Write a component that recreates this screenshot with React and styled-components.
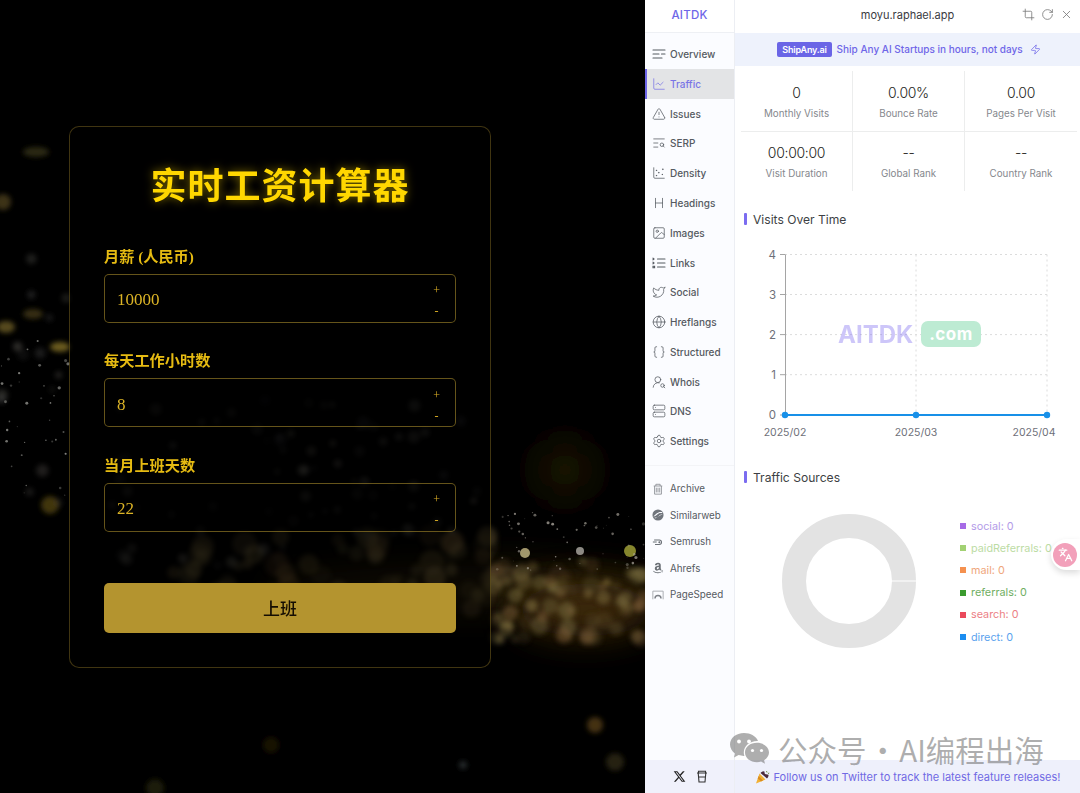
import React from "react";
import styled, { createGlobalStyle } from "styled-components";
import {
  ChartLine, TriangleAlert, TextSearch, ChartScatter, Heading, Image, Twitter, Globe, Braces,
  UserRoundSearch, Server, Settings, Crop, RotateCw, X, Zap, Languages
} from "lucide-react";
import { FaXTwitter, FaAmazon } from "react-icons/fa6";

const GlobalStyle = createGlobalStyle`
  html, body { margin: 0; padding: 0; height: 100%; background: #000; overflow: hidden; }
  * { box-sizing: border-box; }
`;

const Page = styled.div`
  position: relative;
  display: flex;
  width: 1080px;
  height: 793px;
  overflow: hidden;
  font-family: Inter, "Noto Sans CJK SC", sans-serif;
`;

/* left side: the calculator */
const Stage = styled.div`
  position: relative;
  flex: 0 0 645px;
  display: flex;
  align-items: center;
  padding-left: 69px;
  background: #000;
`;

const Bokeh = styled.svg`
  position: absolute;
  inset: 0;
`;

const Card = styled.form`
  position: relative;
  width: 422px;
  height: 542px;
  padding: 35px 34px;
  border: 1px solid rgba(212, 175, 55, 0.3);
  border-radius: 10px;
  background: rgba(0, 0, 0, 0.55);
  font-family: "Liberation Serif", "Noto Sans CJK SC", serif;
`;

const Title = styled.h1`
  margin: 0 0 33px;
  height: 50px;
  line-height: 50px;
  text-align: center;
  font-size: 36px;
  font-weight: 700;
  letter-spacing: 1px;
  color: #ffd700;
  text-shadow: 0 0 10px rgba(255, 215, 0, 0.5);
`;

const Field = styled.div`
  margin-bottom: 26.7px;
`;

const FieldLabel = styled.label`
  display: block;
  height: 24px;
  margin-bottom: 5px;
  line-height: 24px;
  font-size: 15.2px;
  font-weight: 700;
  color: #e6bb12;
`;

const InputBox = styled.div`
  display: flex;
  align-items: center;
  height: 49px;
  padding: 0 15px 0 12px;
  border: 1px solid rgba(212, 175, 55, 0.48);
  border-radius: 5px;
  background: rgba(0, 0, 0, 0.4);
`;

const NumberInput = styled.input`
  flex: 1;
  min-width: 0;
  border: 0;
  outline: 0;
  padding: 4px 0 0;
  background: transparent;
  font: 17px "Liberation Serif", serif;
  color: #dcb426;
`;

const Stepper = styled.div`
  display: flex;
  flex-direction: column;
  justify-content: space-between;
  height: 33px;
  margin-top: 5px;
  text-align: center;
  font: 12px/12px "Liberation Serif", serif;
  color: #d9ad25;
`;

const Submit = styled.button`
  display: block;
  width: 352px;
  height: 50px;
  margin-top: 51px;
  border: 0;
  border-radius: 5px;
  background: #b4942f;
  font-family: "Liberation Serif", "Noto Sans CJK SC", serif;
  font-size: 17px;
  font-weight: 500;
  color: #140d02;
`;

/* right side: the extension panel */
const Panel = styled.div`
  flex: 1;
  display: flex;
  background: #fff;
`;

const Sidebar = styled.aside`
  flex: 0 0 90px;
  display: flex;
  flex-direction: column;
  border-right: 1px solid #eceef3;
  background: #fbfcff;
`;

const Logo = styled.div`
  height: 33px;
  line-height: 30px;
  border-bottom: 1px solid #eef0f4;
  background: #fff;
  text-align: center;
  font-size: 11.5px;
  font-weight: 500;
  letter-spacing: 0.2px;
  color: #6e66e8;
`;

const NavGroup = styled.nav`
  padding-top: ${p => p.$top}px;
  margin-top: ${p => p.$gap}px;
  border-top: ${p => (p.$gap ? "1px solid #f3f4f7" : "0")};
`;

const NavItem = styled.a`
  display: flex;
  align-items: center;
  gap: ${p => (p.$small ? 6 : 4)}px;
  height: ${p => (p.$small ? 26.5 : 29.77)}px;
  padding-left: 5px;
  border-left: 2px solid ${p => (p.$active ? "#6e66e8" : "transparent")};
  background: ${p => (p.$active ? "#e3e4e6" : "transparent")};
  font-size: ${p => (p.$small ? 9.8 : 10)}px;
  font-weight: ${p => (p.$small ? 400 : 500)};
  color: ${p => (p.$active ? "#7a74e6" : "#555a61")};
  white-space: nowrap;

  svg {
    flex: 0 0 ${p => (p.$small ? 12 : 14)}px;
    width: ${p => (p.$small ? 12 : 14)}px;
    height: ${p => (p.$small ? 12 : 14)}px;
  }
`;

const SideFooter = styled.div`
  display: flex;
  align-items: center;
  justify-content: center;
  gap: 10px;
  height: 33px;
  margin-top: auto;
  padding-left: 1px;
  background: #f0f1fb;
  color: #222;
`;

const Main = styled.main`
  flex: 1;
  min-width: 0;
  display: flex;
  flex-direction: column;
`;

const Header = styled.header`
  position: relative;
  height: 33px;
  line-height: 30px;
  text-align: center;
  font-size: 11px;
  color: #3a3a3f;
  background: #fff;
`;

const HeaderTools = styled.div`
  position: absolute;
  top: 8px;
  right: 7px;
  display: flex;
  gap: 6px;
  color: #777;

  svg {
    width: 13px;
    height: 13px;
  }
`;

const Banner = styled.div`
  display: flex;
  align-items: center;
  justify-content: center;
  gap: 5px;
  height: 33px;
  padding: 0 0 1px 3px;
  background: #eef2fc;
  font-size: 10px;
  font-weight: 500;
  color: #6e66e8;
`;

const BannerTag = styled.span`
  padding: 2px 5px;
  border-radius: 2px;
  background: #6a65e6;
  font-size: 9px;
  font-weight: 600;
  letter-spacing: -0.2px;
  color: #fff;
`;

const StatsGrid = styled.div`
  display: grid;
  grid-template-columns: repeat(3, 112px);
  margin: 5px 3px 0 6px;
`;

const Stat = styled.div`
  height: 60px;
  padding-top: ${p => (p.$lower ? 11 : 12)}px;
  text-align: center;
  border-right: ${p => (p.$last ? "0" : "1px solid #eceded")};
  border-top: ${p => (p.$lower ? "1px solid #eceded" : "0")};
`;

const StatValue = styled.div`
  height: 20px;
  line-height: 20px;
  font-size: 14px;
  font-weight: 300;
  letter-spacing: -0.3px;
  color: #1f1f22;
`;

const StatLabel = styled.div`
  margin-top: 2px;
  line-height: 18px;
  font-size: 9.8px;
  color: #85878d;
`;

const SectionTitle = styled.h2`
  display: flex;
  align-items: center;
  gap: 6px;
  height: 20px;
  margin: ${p => p.$top}px 0 0 9px;
  font-size: 12.1px;
  font-weight: 400;
  color: #3d3f44;

  &::before {
    content: "";
    width: 3px;
    height: 12px;
    border-radius: 1px;
    background: #7b6cf0;
  }
`;

const Chart = styled.svg`
  display: block;
  flex: 0 0 auto;
  margin-left: ${p => p.$left || 0}px;
`;

const SourcesRow = styled.div`
  display: flex;
  align-items: flex-start;
  margin-top: 14px;
`;

const Legend = styled.ul`
  margin: 14px 0 0 31px;
  padding: 0;
  list-style: none;
  white-space: nowrap;
`;

const LegendItem = styled.li`
  display: flex;
  align-items: center;
  gap: 5px;
  height: 22.2px;
  font-size: 10.8px;
  color: ${p => p.$text};

  &::before {
    content: "";
    width: 6px;
    height: 6px;
    background: ${p => p.$dot};
  }
`;

const Footer = styled.footer`
  display: flex;
  align-items: center;
  justify-content: center;
  gap: 4px;
  height: 33px;
  margin-top: auto;
  background: #eef0fb;
  font-size: 11px;
  color: #7069e4;
  white-space: nowrap;
`;

const FloatPill = styled.div`
  position: absolute;
  top: 539px;
  right: 0;
  display: flex;
  align-items: center;
  width: 29px;
  height: 31px;
  padding-left: 2px;
  border-radius: 16px 0 0 16px;
  background: #fff;
  box-shadow: 0 3px 6px rgba(0, 0, 0, 0.14);
`;

const FloatIcon = styled.div`
  display: flex;
  align-items: center;
  justify-content: center;
  width: 24px;
  height: 24px;
  border-radius: 50%;
  background: #f2a0ba;
  color: #fff;
`;

const Watermark = styled.div`
  position: absolute;
  left: 729px;
  top: 729px;
  display: flex;
  align-items: center;
  gap: 8px;
  height: 40px;
  font-family: "Noto Sans CJK SC", sans-serif;
  font-size: 29.5px;
  word-spacing: -5px;
  color: rgba(120, 120, 120, 0.6);
  white-space: nowrap;
`;

/* small seeded generator so the dust is the same on each load */
const seeded = seed => () => {
  seed = (seed * 16807) % 2147483647;
  return (seed - 1) / 2147483646;
};

const makeDust = () => {
  const r = seeded(4242);
  const gold = ["#8f7f48", "#7f7444", "#97834a", "#705f38", "#80603a"];
  const grey = ["#8d8a80", "#6f6c66", "#a09c8c", "#5c5c60"];
  const pick = list => list[Math.floor(r() * list.length)];
  const spots = [];
  // gold band under the card
  for (let i = 0; i < 70; i++) {
    const x = 170 + r() * 321;
    spots.push({ x, y: 535 + r() * 75, s: 5 + r() * 8, c: pick(gold), o: 0.12 + r() * 0.28, f: "m" });
  }
  // gold band right of the card
  for (let i = 0; i < 70; i++) {
    spots.push({ x: 491 + r() * 154, y: 560 + r() * 80, s: 3.5 + r() * 6, c: pick(gold), o: 0.15 + r() * 0.35, f: "m" });
  }
  // grey soft bokeh inside the lower card
  for (let i = 0; i < 80; i++) {
    const x = 100 + r() * 390;
    const y = 400 + r() * 170;
    spots.push({ x, y, s: 2.5 + r() * 4, c: pick(grey), o: 0.08 + r() * 0.22, f: "m" });
  }
  // left edge, soft blobs
  for (let i = 0; i < 14; i++) {
    spots.push({ x: r() * 68, y: 230 + r() * 280, s: 3 + r() * 4, c: pick(grey), o: 0.12 + r() * 0.2, f: "m" });
  }
  // left edge, small specks
  for (let i = 0; i < 36; i++) {
    spots.push({ x: r() * 68, y: 340 + r() * 160, s: 0.5 + r() * 1.2, c: "#b0b0aa", o: 0.25 + r() * 0.45, f: "s" });
  }
  // sharp specks at the right
  for (let i = 0; i < 60; i++) {
    spots.push({ x: 492 + r() * 153, y: 512 + r() * 60, s: 0.4 + r() * 1.2, c: "#b8b2a8", o: 0.25 + r() * 0.5, f: "s" });
  }
  return spots;
};

const dust = makeDust();

const DustLayer = () => (
  <Bokeh width="645" height="793" viewBox="0 0 645 793">
    <defs>
      <filter id="soft" x="-50%" y="-50%" width="200%" height="200%"><feGaussianBlur stdDeviation="2.8" /></filter>
      <filter id="crisp" x="-50%" y="-50%" width="200%" height="200%"><feGaussianBlur stdDeviation="0.5" /></filter>
      <filter id="wide" x="-150%" y="-250%" width="400%" height="600%"><feGaussianBlur stdDeviation="18" /></filter>
    </defs>
    <ellipse cx="470" cy="590" rx="210" ry="24" fill="#3c2e10" opacity="0.55" filter="url(#wide)" />
    <ellipse cx="585" cy="610" rx="70" ry="26" fill="#50340e" opacity="0.75" filter="url(#wide)" />
    <ellipse cx="565" cy="470" rx="30" ry="32" fill="#1c1204" opacity="0.9" filter="url(#wide)" />
    <g filter="url(#soft)">
      {dust.filter(d => d.f === "m").map((d, i) => (
        <circle key={i} cx={d.x} cy={d.y} r={d.s} fill={d.c} opacity={d.o} />
      ))}
      <circle cx="3" cy="202" r="8" fill="#6d5b28" opacity="0.55" />
      <ellipse cx="36" cy="152" rx="13" ry="5" fill="#4a4220" opacity="0.6" />
      <ellipse cx="6" cy="327" rx="9" ry="6" fill="#7a6a28" opacity="0.7" />
      <ellipse cx="60" cy="347" rx="10" ry="5" fill="#8f7a28" opacity="0.75" />
      <ellipse cx="33" cy="314" rx="10" ry="5" fill="#5a4c1e" opacity="0.6" />
      <circle cx="50" cy="505" r="9" fill="#5d4c16" opacity="0.7" />
      <circle cx="155" cy="788" r="9" fill="#3a3510" opacity="0.5" />
      <circle cx="271" cy="745" r="8" fill="#2a1a08" opacity="0.6" />
      <circle cx="595" cy="725" r="8" fill="#7c5a1e" opacity="0.55" />
      <circle cx="463" cy="765" r="4" fill="#3d4348" opacity="0.6" />
      <circle cx="615" cy="762" r="9" fill="#4c4220" opacity="0.5" />
    </g>
    <g filter="url(#crisp)">
      <circle cx="630" cy="551" r="6" fill="#a8a83a" opacity="0.8" />
      <circle cx="525" cy="553" r="5" fill="#c8bc86" opacity="0.8" />
      <circle cx="580" cy="551" r="4" fill="#bcb8b0" opacity="0.75" />
      {dust.filter(d => d.f === "s").map((d, i) => (
        <circle key={i} cx={d.x} cy={d.y} r={d.s} fill={d.c} opacity={d.o} />
      ))}
    </g>
  </Bokeh>
);

const OverviewIcon = () => (
  <svg viewBox="0 0 14 14" fill="none" stroke="currentColor" strokeWidth="1.1" strokeLinecap="round">
    <path d="M1 3h12M1 7h6M9.500 7H13M1 11h9" />
  </svg>
);

const LinksIcon = () => (
  <svg viewBox="0 0 14 14" fill="none" stroke="currentColor" strokeWidth="1.1" strokeLinecap="round">
    <path d="M5.500 3H13M5.500 7H13M5.500 11H13M1 2.200l1 .8-1 .8M1 6.200l1 .8-1 .8M1 10.200h1.600v1.600H1z" />
  </svg>
);

const ArchiveIcon = () => (
  <svg viewBox="0 0 14 14" fill="none" stroke="#8b8f94" strokeWidth="1">
    <path d="M2 3.500h10M3 3.500V13h8V3.500M5 5.500V11M7 5.500V11M9 5.500V11M4.500 3.500V1.500h5v2" />
  </svg>
);

const SimilarwebIcon = () => (
  <svg viewBox="0 0 14 14">
    <circle cx="7" cy="7" r="6.500" fill="#70757c" />
    <path d="M1.500 8.800c2.200-.2 3.600-1.500 5-2.800 1.500-1.300 3.200-1.800 5.800-1.200-.2-.5-.5-1-.8-1.200-2-.5-4.600.2-6.200 1.600M12.500 5.900c-2 .2-3.400 1.100-4.600 2.300-1.400 1.300-3.200 2.200-5 2l.6 1" fill="#fbfcff" />
  </svg>
);

const SemrushIcon = () => (
  <svg viewBox="0 0 14 14" fill="none" stroke="#6b7076" strokeWidth="1.2">
    <path d="M1 7h4.500M2.500 4.600h6a2.600 2.600 0 0 1 0 5.200h-5" />
    <circle cx="8.600" cy="7.200" r="1.200" fill="#6b7076" stroke="none" />
  </svg>
);

const SpeedIcon = () => (
  <svg viewBox="0 0 14 14" fill="none" stroke="#7d8187" strokeWidth="1.1">
    <path d="M1 2.500h12M1 2.500V12M13 2.500V12" stroke="#a8abb0" />
    <path d="M3.500 11a3.500 3.500 0 0 1 7 0" strokeWidth="1.700" />
  </svg>
);

const CupIcon = () => (
  <svg width="12" height="13" viewBox="0 0 12 13" fill="none" stroke="#333" strokeWidth="1.1">
    <path d="M1 3h10M2.500 3V1.300h7V3M2.200 3l.8 9h6l.8-9M2.600 7h6.800" />
  </svg>
);

const PopperIcon = () => (
  <svg width="15" height="14" viewBox="0 0 15 14">
    <path d="M1 13.500 4.500 3.500l6 6z" fill="#f2b134" />
    <path d="M3.600 6 8 10.500l-2 1L2.700 8.500z" fill="#d98c1f" />
    <path d="M5.500 3c1-1.200 2.800-1.800 3.800-1.600l.6 2.600 3.600.8c.2 1.200-.4 2.600-1.500 3.600z" fill="#4b2a3c" />
    <path d="M11 1.500l1.400.6M13 3.500l1.200-.4" stroke="#6a8f3a" strokeWidth="1" />
  </svg>
);

const WeChatIcon = () => (
  <svg width="41" height="34" viewBox="0 0 41 34" fill="rgba(120,120,120,0.6)">
    <path d="M15 1C7 1 1 6 1 12.500c0 3.600 2 6.800 5 9l-1 4 4.600-2.400c1.700.5 3.400.8 5.200.8h.6c-.4-1.200-.6-2.300-.6-3.500 0-6.400 6-11.400 13.400-11.400h.8C27.300 4.400 21.600 1 15 1z" />
    <path d="M40 20.500C40 15 34.700 10.800 28 10.800S16 15 16 20.500 21.300 30.200 28 30.200c1.400 0 2.800-.2 4.100-.6l3.900 2.100-.9-3.400c2.900-1.900 4.900-4.800 4.900-7.800z" />
    <circle cx="10" cy="9.500" r="1.900" fill="#fff" />
    <circle cx="20" cy="9.500" r="1.900" fill="#fff" />
    <circle cx="23.500" cy="18.500" r="1.600" fill="#fff" />
    <circle cx="32.500" cy="18.500" r="1.600" fill="#fff" />
  </svg>
);

const navItems = [
  ["Overview", <OverviewIcon />],
  ["Traffic", <ChartLine strokeWidth={1.3} />, true],
  ["Issues", <TriangleAlert strokeWidth={1.3} />],
  ["SERP", <TextSearch strokeWidth={1.3} />],
  ["Density", <ChartScatter strokeWidth={1.3} />],
  ["Headings", <Heading strokeWidth={1.3} />],
  ["Images", <Image strokeWidth={1.3} />],
  ["Links", <LinksIcon />],
  ["Social", <Twitter strokeWidth={1.3} />],
  ["Hreflangs", <Globe strokeWidth={1.3} />],
  ["Structured", <Braces strokeWidth={1.3} />],
  ["Whois", <UserRoundSearch strokeWidth={1.3} />],
  ["DNS", <Server strokeWidth={1.3} />],
  ["Settings", <Settings strokeWidth={1.3} />],
];

const toolItems = [
  ["Archive", <ArchiveIcon />],
  ["Similarweb", <SimilarwebIcon />],
  ["Semrush", <SemrushIcon />],
  ["Ahrefs", <FaAmazon color="#6b7076" />],
  ["PageSpeed", <SpeedIcon />],
];

const stats = [
  ["0", "Monthly Visits"],
  ["0.00%", "Bounce Rate"],
  ["0.00", "Pages Per Visit"],
  ["00:00:00", "Visit Duration"],
  ["--", "Global Rank"],
  ["--", "Country Rank"],
];

const sources = [
  ["social: 0", "#a66be6", "#b39be8"],
  ["paidReferrals: 0", "#a2d173", "#bcdca4"],
  ["mail: 0", "#f5914f", "#efa67c"],
  ["referrals: 0", "#3b9b2f", "#6fae62"],
  ["search: 0", "#ea4a5c", "#ec7f86"],
  ["direct: 0", "#1b8df0", "#5ca3ee"],
];

const fields = [
  ["月薪 (人民币)", "10000"],
  ["每天工作小时数", "8"],
  ["当月上班天数", "22"],
];

const VisitsChart = () => {
  const ys = [415, 374.7, 334.6, 294.5, 254.5].map(y => y - 229);
  const xs = [50, 181, 312];
  return (
    <Chart width="345" height="231" viewBox="0 0 345 231">
      {ys.slice(1).map(y => (
        <line key={y} x1="50" x2="312" y1={y} y2={y} stroke="#dcdcdc" strokeDasharray="2 3" />
      ))}
      {xs.slice(1).map(x => (
        <line key={x} x1={x} x2={x} y1={ys[4]} y2={ys[0]} stroke="#dcdcdc" strokeDasharray="2 3" />
      ))}
      <line x1="50.500" x2="50.500" y1={ys[4]} y2={ys[0]} stroke="#a5a5a5" />
      {ys.map((y, i) => (
        <g key={i}>
          <line x1="45" x2="50" y1={y} y2={y} stroke="#a5a5a5" />
          <text x="41" y={y + 4} textAnchor="end" fontSize="11.500" fill="#6e7079">{i}</text>
        </g>
      ))}
      <text x="50" y="207" textAnchor="middle" fontSize="10.500" fill="#6e7079">2025/02</text>
      <text x="181" y="207" textAnchor="middle" fontSize="10.500" fill="#6e7079">2025/03</text>
      <text x="299" y="207" textAnchor="middle" fontSize="10.500" fill="#6e7079">2025/04</text>
      <text x="103" y="114" fontSize="24" fontWeight="700" fill="#7d6cf0" opacity="0.38">AITDK</text>
      <rect x="186" y="92" width="60" height="26" rx="7" fill="#bdebd3" />
      <text x="216" y="111" textAnchor="middle" fontSize="17" fontWeight="700" letterSpacing="0.500" fill="#fff">.com</text>
      <line x1="50" x2="312" y1={ys[0]} y2={ys[0]} stroke="#1890e8" strokeWidth="2" />
      {xs.map(x => <circle key={x} cx={x} cy={ys[0]} r="3.200" fill="#1890e8" />)}
    </Chart>
  );
};

const SourcesDonut = () => (
  <Chart $left={34} width="160" height="160" viewBox="0 0 160 160">
    <circle cx="80" cy="80" r="55" fill="none" stroke="#e3e3e3" strokeWidth="24" />
    <line x1="103" x2="147" y1="80" y2="80" stroke="#fff" strokeWidth="1" />
  </Chart>
);

export default function App() {
  return (
    <Page>
      <GlobalStyle />
      <Stage>
        <DustLayer />
        <Card onSubmit={e => e.preventDefault()}>
          <Title>实时工资计算器</Title>
          {fields.map(([label, value]) => (
            <Field key={label}>
              <FieldLabel>{label}</FieldLabel>
              <InputBox>
                <NumberInput value={value} readOnly />
                <Stepper>
                  <span>+</span>
                  <span>-</span>
                </Stepper>
              </InputBox>
            </Field>
          ))}
          <Submit>上班</Submit>
        </Card>
      </Stage>
      <Panel>
        <Sidebar>
          <Logo>AITDK</Logo>
          <NavGroup $top={6.3} $gap={0}>
            {navItems.map(([name, icon, active]) => (
              <NavItem key={name} $active={active}>{icon}{name}</NavItem>
            ))}
          </NavGroup>
          <NavGroup $top={10} $gap={8.5}>
            {toolItems.map(([name, icon]) => (
              <NavItem key={name} $small>{icon}{name}</NavItem>
            ))}
          </NavGroup>
          <SideFooter>
            <FaXTwitter size={13} />
            <CupIcon />
          </SideFooter>
        </Sidebar>
        <Main>
          <Header>
            moyu.raphael.app
            <HeaderTools>
              <Crop strokeWidth={1.5} />
              <RotateCw strokeWidth={1.5} />
              <X strokeWidth={1.5} />
            </HeaderTools>
          </Header>
          <Banner>
            <BannerTag>ShipAny.ai</BannerTag>
            Ship Any AI Startups in hours, not days
            <Zap size={11} strokeWidth={1.6} style={{ marginLeft: 2 }} />
          </Banner>
          <StatsGrid>
            {stats.map(([value, label], i) => (
              <Stat key={label} $lower={i > 2} $last={i % 3 === 2}>
                <StatValue>{value}</StatValue>
                <StatLabel>{label}</StatLabel>
              </Stat>
            ))}
          </StatsGrid>
          <SectionTitle $top={18}>Visits Over Time</SectionTitle>
          <VisitsChart />
          <SectionTitle $top={7}>Traffic Sources</SectionTitle>
          <SourcesRow>
            <SourcesDonut />
            <Legend>
              {sources.map(([text, dot, color]) => (
                <LegendItem key={text} $dot={dot} $text={color}>{text}</LegendItem>
              ))}
            </Legend>
          </SourcesRow>
          <Footer>
            <PopperIcon />
            Follow us on Twitter to track the latest feature releases!
          </Footer>
        </Main>
      </Panel>
      <FloatPill>
        <FloatIcon><Languages size={15} strokeWidth={2} /></FloatIcon>
      </FloatPill>
      <Watermark>
        <WeChatIcon />
        公众号 · AI编程出海
      </Watermark>
    </Page>
  );
}
